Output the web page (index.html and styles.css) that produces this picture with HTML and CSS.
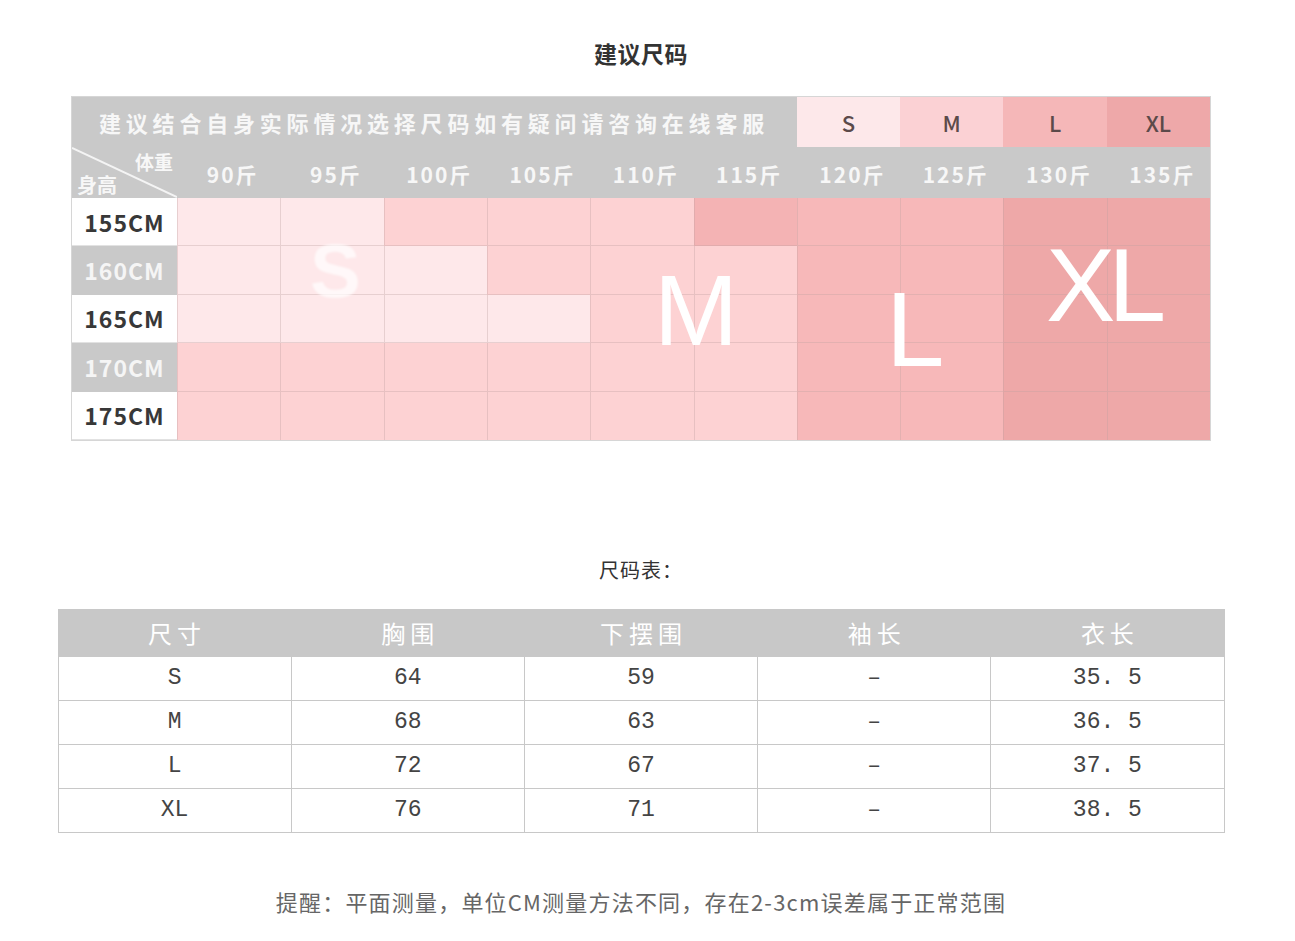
FILE: index.html
```html
<!DOCTYPE html>
<html lang="zh">
<head>
<meta charset="utf-8">
<title>建议尺码</title>
<link rel="stylesheet" href="styles.css">
</head>
<body>
<div class="page">
  <h1 class="title">建议尺码</h1>

  <div class="chart">
    <div class="note">建议结合自身实际情况选择尺码如有疑问请咨询在线客服</div>
    <div class="size-head s">S</div>
    <div class="size-head m">M</div>
    <div class="size-head l">L</div>
    <div class="size-head xl">XL</div>

    <div class="corner">
      <svg class="diag" viewBox="0 0 105 51" preserveAspectRatio="none"><line x1="0" y1="1" x2="105" y2="50" stroke="#f4f4f4" stroke-width="2"/></svg>
      <span class="c-top">体重</span>
      <span class="c-bot">身高</span>
    </div>
    <div class="wt">90斤</div>
    <div class="wt">95斤</div>
    <div class="wt">100斤</div>
    <div class="wt">105斤</div>
    <div class="wt">110斤</div>
    <div class="wt">115斤</div>
    <div class="wt">120斤</div>
    <div class="wt">125斤</div>
    <div class="wt">130斤</div>
    <div class="wt">135斤</div>

    <div class="ht">155CM</div>
    <div class="cell s"></div><div class="cell s"></div><div class="cell m"></div><div class="cell m"></div><div class="cell m"></div><div class="cell l2"></div><div class="cell l"></div><div class="cell l"></div><div class="cell xl"></div><div class="cell xl"></div>

    <div class="ht grey">160CM</div>
    <div class="cell s"></div><div class="cell s"></div><div class="cell s"></div><div class="cell m"></div><div class="cell m"></div><div class="cell m"></div><div class="cell l"></div><div class="cell l"></div><div class="cell xl"></div><div class="cell xl"></div>

    <div class="ht">165CM</div>
    <div class="cell s"></div><div class="cell s"></div><div class="cell s"></div><div class="cell s"></div><div class="cell m"></div><div class="cell m"></div><div class="cell l"></div><div class="cell l"></div><div class="cell xl"></div><div class="cell xl"></div>

    <div class="ht grey">170CM</div>
    <div class="cell m"></div><div class="cell m"></div><div class="cell m"></div><div class="cell m"></div><div class="cell m"></div><div class="cell m"></div><div class="cell l"></div><div class="cell l"></div><div class="cell xl"></div><div class="cell xl"></div>

    <div class="ht">175CM</div>
    <div class="cell m last"></div><div class="cell m last"></div><div class="cell m last"></div><div class="cell m last"></div><div class="cell m last"></div><div class="cell m last"></div><div class="cell l last"></div><div class="cell l last"></div><div class="cell xl last"></div><div class="cell xl last"></div>

    <span class="big big-s">S</span>
    <span class="big big-m">M</span>
    <span class="big big-l">L</span>
    <span class="big big-xl">XL</span>
  </div>

  <h2 class="subtitle">尺码表：</h2>

  <table class="sizes">
    <thead>
      <tr><th>尺寸</th><th>胸围</th><th>下摆围</th><th>袖长</th><th>衣长</th></tr>
    </thead>
    <tbody>
      <tr><td>S</td><td>64</td><td>59</td><td>–</td><td>35. 5</td></tr>
      <tr><td>M</td><td>68</td><td>63</td><td>–</td><td>36. 5</td></tr>
      <tr><td>L</td><td>72</td><td>67</td><td>–</td><td>37. 5</td></tr>
      <tr><td>XL</td><td>76</td><td>71</td><td>–</td><td>38. 5</td></tr>
    </tbody>
  </table>

  <p class="tip">提醒：平面测量，单位CM测量方法不同，存在2-3cm误差属于正常范围</p>
</div>
</body>
</html>
```

FILE: styles.css
```css
* { box-sizing: border-box; }

body {
  margin: 0;
  background: #ffffff;
  font-family: "Noto Sans CJK SC", "Noto Sans", sans-serif;
}

.page {
  width: 1282px;
  padding-top: 37px;
  display: flex;
  flex-direction: column;
  align-items: center;
}

.title {
  margin: 0;
  font-size: 23px;
  line-height: 32px;
  font-weight: 700;
  color: #333333;
  letter-spacing: 0.5px;
}

/* ---------- recommendation chart ---------- */
.chart {
  position: relative;
  margin-top: 27px;
  width: 1140px;
  border: 1px solid #d6d6d6;
  display: grid;
  grid-template-columns: 105px repeat(10, 1fr);
  grid-template-rows: 50px 51px repeat(5, 48.4px);
  overflow: hidden;
}

.note {
  grid-column: span 7;
  background: #c9c9c9;
  color: #f7f7f7;
  font-size: 22px;
  font-weight: 700;
  letter-spacing: 4.8px;
  padding-left: 27px;
  display: flex;
  align-items: center;
  white-space: nowrap;
}

.size-head {
  display: flex;
  align-items: center;
  justify-content: center;
  font-size: 22px;
  font-weight: 500;
  color: #5b4a4a;
}
.size-head.s { background: #fde8ea; }
.size-head.m { background: #fbd1d4; }
.size-head.l { background: #f5b7b8; }
.size-head.xl { background: #eea8a9; }

.corner {
  position: relative;
  background: #c9c9c9;
  display: flex;
  flex-direction: column;
  justify-content: space-between;
  padding: 4px 4px 2px 5px;
  color: #f7f7f7;
  font-weight: 700;
}
.diag {
  position: absolute;
  left: 0;
  top: 0;
  width: 100%;
  height: 100%;
}
.c-top {
  position: relative;
  align-self: flex-end;
  font-size: 19px;
  line-height: 22px;
}
.c-bot {
  position: relative;
  align-self: flex-start;
  font-size: 20px;
  line-height: 22px;
}

.wt {
  background: #c9c9c9;
  color: #f7f7f7;
  font-size: 21px;
  font-weight: 700;
  letter-spacing: 2px;
  display: flex;
  align-items: center;
  justify-content: center;
  padding-top: 2px;
  padding-left: 8px;
}

.ht {
  background: #ffffff;
  color: #383838;
  font-size: 23px;
  font-weight: 700;
  letter-spacing: 1px;
  display: flex;
  align-items: center;
  justify-content: center;
  border-bottom: 1px solid #e2e2e2;
}
.ht.grey {
  background: #c9c9c9;
  color: #f5f5f5;
  border-bottom-color: #c9c9c9;
}

.cell {
  border-left: 1px solid rgba(190, 160, 160, 0.35);
  border-bottom: 1px solid rgba(190, 160, 160, 0.35);
}
.cell.last { border-bottom: none; }
.cell.s { background: #fee8ea; }
.cell.m { background: #fdd2d3; }
.cell.l { background: #f7b8b9; }
.cell.l2 { background: #f4b3b4; }
.cell.xl { background: #eea8a8; }

.big {
  position: absolute;
  font-family: "Liberation Sans", Arial, sans-serif;
  line-height: 1;
  color: #ffffff;
  pointer-events: none;
}
.big-s {
  left: 238px;
  top: 136px;
  font-size: 76px;
  font-weight: 700;
  color: rgba(255, 255, 255, 0.7);
  filter: blur(1.2px);
}
.big-m {
  left: 582px;
  top: 163px;
  font-size: 101px;
}
.big-l {
  left: 814px;
  top: 180px;
  font-size: 105px;
}
.big-xl {
  left: 974px;
  top: 136px;
  font-size: 104px;
  letter-spacing: -7px;
}

/* ---------- size table ---------- */
.subtitle {
  margin: 115px 0 0;
  font-size: 20px;
  line-height: 28px;
  font-weight: 400;
  color: #333333;
  letter-spacing: 1px;
}

.sizes {
  margin-top: 25px;
  width: 1167px;
  border-collapse: collapse;
  table-layout: fixed;
}
.sizes th {
  height: 47px;
  background: #c8c8c8;
  color: #ffffff;
  font-size: 24px;
  font-weight: 400;
  letter-spacing: 5px;
  text-indent: 5px;
  border: 1px solid #c8c8c8;
  padding: 0;
}
.sizes td {
  height: 44px;
  border: 1px solid #c8c8c8;
  text-align: center;
  font-family: "Liberation Mono", "DejaVu Sans Mono", monospace;
  font-size: 23px;
  color: #444444;
  padding: 0;
}

.tip {
  margin: 53px 0 0;
  font-size: 22px;
  line-height: 30px;
  color: #666666;
  letter-spacing: 1.2px;
}
```
